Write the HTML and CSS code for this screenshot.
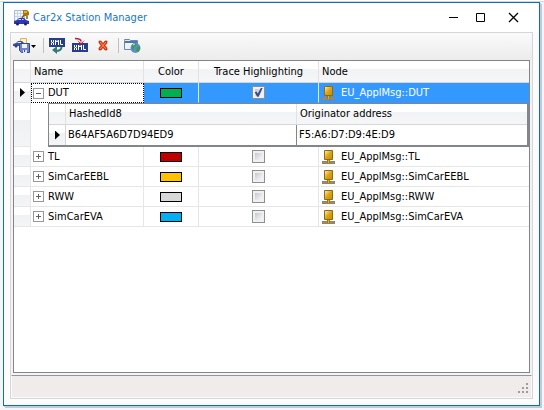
FILE: index.html
```html
<!DOCTYPE html>
<html lang="en">
<head>
<meta charset="utf-8">
<title>Car2x Station Manager</title>
<link rel="stylesheet" href="styles.css">
</head>
<body>
<svg class="defs" aria-hidden="true">
  <defs>
    <linearGradient id="gold" x1="0" y1="0" x2="1" y2="1">
      <stop offset="0" stop-color="#fbf3cc"/><stop offset=".5" stop-color="#d9a515"/><stop offset="1" stop-color="#c88a00"/>
    </linearGradient>
    <symbol id="node" viewBox="0 0 13 14">
      <path d="M0 11h13v3H0z" fill="#858585"/><path d="M1 12h11v1H1z" fill="#c08a20"/>
      <path d="M5 9h3v4H5z" fill="#a8780c"/><path d="M6 9h1v4H6z" fill="#e0b020"/>
      <path d="M2.500.5h8v9h-8z" fill="url(#gold)" stroke="#94680c"/>
    </symbol>
    <symbol id="xml" viewBox="0 0 16 9">
      <path d="M0 0h16v9H0z" fill="#253d8c"/>
      <path d="M2.500 2v2l2 1v2M4.500 2v2l-2 1v2M6.500 7V2l1.500 2 1.500-2v5M11.500 2v4.500H14" fill="none" stroke="#fff"/>
    </symbol>
  </defs>
</svg>
<main class="window">
  <header class="titlebar">
    <svg class="app-icon" viewBox="0 0 17 17" aria-hidden="true">
      <path d="M1.500 1.500h10v11h-10z" fill="#f4f8fe" stroke="#a8bcdc"/>
      <path d="M2 4.500h9M2 7.500h9M4.500 2v9M7.500 2v9" stroke="#c4d5ee"/>
      <path d="M10 1h4l2 2v3l-2 1h-3l-1-2z" fill="#a8740c"/><path d="M11 2h3v2h-3z" fill="#e0ae38"/>
      <path d="M11 6l-2 3M14 7v3" stroke="#8a5c10" stroke-width="1.500"/>
      <path d="M1 12l3-1 2-2h5l2 2 3 1v3H1z" fill="#3038b0"/>
      <path d="M6 10h2v1H5zM9 10h1l1 1H9z" fill="#dce4ff"/>
      <circle cx="4.500" cy="15" r="1.500" fill="#18206c"/><circle cx="12.500" cy="15" r="1.500" fill="#18206c"/>
    </svg>
    <h1>Car2x Station Manager</h1>
    <div class="caption-buttons">
      <button type="button" class="minimize" aria-label="Minimize"><svg viewBox="0 0 11 11"><path d="M1 5.500h9"/></svg></button>
      <button type="button" class="maximize" aria-label="Maximize"><svg viewBox="0 0 11 11"><path d="M1.500 1.500h8v8h-8z"/></svg></button>
      <button type="button" aria-label="Close"><svg viewBox="0 0 11 11"><path class="cross" d="M1 1l9 9M10 1l-9 9"/></svg></button>
    </div>
  </header>
  <section class="panel">
    <div class="toolbar" role="toolbar" aria-label="Stations">
      <button type="button" class="save" aria-label="Save station">
        <svg width="24" height="17" viewBox="0 0 24 17">
          <path d="M7.500 1.500h6v6h-6z" fill="#fff2c8" stroke="#e0b450"/>
          <path d="M0 7l3-1 2-2h4l2 2 1 1v2H0z" fill="#4050a8"/><path d="M5 5h3v1H4z" fill="#dce4ff"/>
          <circle cx="3" cy="9" r="1.500" fill="#303c80"/>
          <path d="M6.500 6.500h10v9h-8l-2-2z" fill="#7282cc" stroke="#38468e"/>
          <path d="M9 7h5v4H9z" fill="#eef2ff"/><path d="M10 13h4v3h-4z" fill="#dfe5f8"/><path d="M11 13h1v2h-1z" fill="#38468e"/>
          <path d="M18 8h5l-2.500 3z" fill="#000"/>
        </svg>
      </button>
      <span class="separator"></span>
      <button type="button" class="export" aria-label="Export XML">
        <svg width="16" height="17" viewBox="0 0 16 17">
          <use href="#xml" width="16" height="9" y="1"/>
          <path d="M12.500 10c0 3-2 4-6 4" fill="none" stroke="#347a70" stroke-width="2"/><path d="M3 13l5-4v8z" fill="#347a70"/>
        </svg>
      </button>
      <button type="button" class="import" aria-label="Import XML">
        <svg width="16" height="17" viewBox="0 0 16 17">
          <use href="#xml" width="16" height="9" y="6"/>
          <path d="M3 1.500c4 0 6 1 6 3" fill="none" stroke="#c01838" stroke-width="1.500"/><path d="M5 3l4 3 4-3-4 5z" fill="#c01838"/>
        </svg>
      </button>
      <button type="button" class="delete" aria-label="Delete">
        <svg width="10" height="17" viewBox="0 0 10 17">
          <path d="M1 4h2l2 2.500L7 4h2v2L7 8.500 9 11v2H7l-2-2.500L3 13H1v-2l2-2.500L1 6z" fill="#e03c10" stroke="#b82808" stroke-width=".7"/>
          <path d="M2 5l6 7M8 5l-6 7" stroke="#ff8a58"/>
        </svg>
      </button>
      <span class="separator"></span>
      <button type="button" aria-label="Open web folder">
        <svg width="17" height="17" viewBox="0 0 17 17">
          <path d="M.5 3.500V2.500h5l1 1h7v9H.5z" fill="#fbe7a8" stroke="#6888bc"/>
          <path d="M1 6h12v6H1z" fill="#eef3fc"/><path d="M1 4h12v2H1z" fill="#4878b8"/><path d="M1 3h4v1H1z" fill="#fbe7a8"/>
          <circle cx="11.500" cy="11" r="5" fill="#5b90cc"/>
          <path d="M8 8l3-2 2 1-1 2-2 1v3l-2-1zM13 10l3-1v3l-2 3-2-1z" fill="#3f9a50"/><path d="M9 8l2-1" stroke="#c8e8d0"/>
        </svg>
      </button>
    </div>
    <div class="grid">
      <table class="stations">
        <colgroup><col class="c-marker"><col class="c-name"><col class="c-color"><col class="c-trace"><col></colgroup>
        <thead>
          <tr><th></th><th scope="col">Name</th><th scope="col" class="center">Color</th><th scope="col" class="center">Trace Highlighting</th><th scope="col">Node</th></tr>
        </thead>
        <tbody>
          <tr class="selected">
            <td class="marker"><span class="arrow"></span></td>
            <td class="focused"><div class="name"><button type="button" class="expander open" aria-label="Collapse DUT"></button>DUT</div></td>
            <td><span class="swatch green"></span></td>
            <td><input type="checkbox" aria-label="Trace highlighting DUT" checked></td>
            <td><div class="node"><svg><use href="#node"/></svg>EU_ApplMsg::DUT</div></td>
          </tr>
          <tr class="detail-row">
            <td class="marker"></td>
            <td colspan="4" class="detail-cell">
              <table class="detail">
                <colgroup><col class="c-marker"><col class="c-hash"><col></colgroup>
                <thead><tr><th></th><th scope="col">HashedId8</th><th scope="col">Originator address</th></tr></thead>
                <tbody><tr><td class="marker"><span class="arrow"></span></td><td>B64AF5A6D7D94ED9</td><td>F5:A6:D7:D9:4E:D9</td></tr></tbody>
              </table>
            </td>
          </tr>
          <tr>
            <td class="marker"></td>
            <td><div class="name"><button type="button" class="expander" aria-label="Expand TL"></button>TL</div></td>
            <td><span class="swatch red"></span></td>
            <td><input type="checkbox" aria-label="Trace highlighting TL"></td>
            <td><div class="node"><svg><use href="#node"/></svg>EU_ApplMsg::TL</div></td>
          </tr>
          <tr>
            <td class="marker"></td>
            <td><div class="name"><button type="button" class="expander" aria-label="Expand SimCarEEBL"></button>SimCarEEBL</div></td>
            <td><span class="swatch yellow"></span></td>
            <td><input type="checkbox" aria-label="Trace highlighting SimCarEEBL"></td>
            <td><div class="node"><svg><use href="#node"/></svg>EU_ApplMsg::SimCarEEBL</div></td>
          </tr>
          <tr>
            <td class="marker"></td>
            <td><div class="name"><button type="button" class="expander" aria-label="Expand RWW"></button>RWW</div></td>
            <td><span class="swatch gray"></span></td>
            <td><input type="checkbox" aria-label="Trace highlighting RWW"></td>
            <td><div class="node"><svg><use href="#node"/></svg>EU_ApplMsg::RWW</div></td>
          </tr>
          <tr>
            <td class="marker"></td>
            <td><div class="name"><button type="button" class="expander" aria-label="Expand SimCarEVA"></button>SimCarEVA</div></td>
            <td><span class="swatch blue"></span></td>
            <td><input type="checkbox" aria-label="Trace highlighting SimCarEVA"></td>
            <td><div class="node"><svg><use href="#node"/></svg>EU_ApplMsg::SimCarEVA</div></td>
          </tr>
        </tbody>
      </table>
    </div>
    <footer class="statusbar">
      <svg width="11" height="11" viewBox="0 0 11 11" aria-hidden="true"><path d="M8 0h2v2H8zM4 4h2v2H4zM8 4h2v2H8zM0 8h2v2H0zM4 8h2v2H4zM8 8h2v2H8z" fill="#a09c9c"/></svg>
    </footer>
  </section>
</main>
</body>
</html>
```
FILE: styles.css
```css
* { box-sizing: border-box; }

body {
  margin: 0;
  height: 100vh;
  display: flex;
  padding: 2px 4px 4px 3px;
  background: linear-gradient(#fff 1px, #d8d8dc 1px, #d8d8dc 2px, #f4f5f8 2px);
  font: 11px/14px Tahoma, "DejaVu Sans Condensed", sans-serif;
  color: #000;
}

button { border: 0; padding: 0; background: none; font: inherit; }
.defs { position: absolute; width: 0; height: 0; }

.window {
  flex: 1;
  display: flex;
  flex-direction: column;
  border: 1px solid #0a6fbe;
  background: #fcfcfc;
  box-shadow: 1px 1px #c6c8d8, 2px 2px #c6cad0;
}

.titlebar { display: flex; align-items: center; height: 29px; padding: 0 20px 0 9px; background: #fff; }
.app-icon { width: 17px; height: 17px; }
.titlebar h1 { margin: 0 auto 0 3px; font-size: 11px; line-height: 16px; font-weight: normal; color: #1478c8; }
.caption-buttons { display: flex; }
.caption-buttons button { display: flex; }
.caption-buttons svg { width: 11px; height: 11px; fill: none; stroke: #000; }
.minimize { margin-right: 16px; }
.maximize { margin-right: 22px; }
.caption-buttons .cross { stroke-width: 1.3; }

.panel {
  flex: 1;
  display: flex;
  flex-direction: column;
  margin: 0 6px 6px;
  border: 1px solid #d6d6d6;
  background: #f3f3f3;
}

.toolbar {
  display: flex;
  align-items: center;
  height: 27px;
  padding: 0 2px 3px;
  background: linear-gradient(#fafafa, #ececec);
}
.toolbar button, .toolbar svg { display: block; }
.separator { width: 1px; height: 15px; margin: 0 5px 0 6px; background: #c0c0c0; }
.import { margin-left: 7px; }
.delete { margin: 0 4px 0 10px; }

.grid { flex: 1; margin: 0 2px; border: 1px solid #84848c; background: #fff; }

table { width: 100%; table-layout: fixed; border-collapse: separate; border-spacing: 0; }
.c-marker { width: 17px; }
.c-name { width: 113px; }
.c-color { width: 55px; }
.c-trace { width: 120px; }
.c-hash { width: 231px; }

th {
  height: 22px;
  padding: 0 3px;
  border-right: 1px solid #e2e2e4;
  border-bottom: 1px solid #d6d6d8;
  background: linear-gradient(#fff 40%, #f1f3f5 40%, #f5f6f8);
  font-weight: normal;
  text-align: left;
}
th.center { text-align: center; }
td {
  height: 20px;
  padding: 0;
  border-right: 1px solid #e6e6e6;
  border-bottom: 1px solid #e6e6e6;
  text-align: center;
  white-space: nowrap;
}
th:last-child, td:last-child { border-right: 0; }
.marker, .selected .marker { background: linear-gradient(#fff 40%, #f0f1f3 40%, #f4f5f6); }
.arrow {
  display: block;
  width: 5px;
  height: 9px;
  margin-left: 6px;
  background: #000;
  clip-path: polygon(0 0, 100% 50%, 0 100%);
}

.name, .node { display: flex; align-items: center; }
.name { gap: 4px; padding-left: 2px; }
.node { gap: 6px; padding-left: 3px; }
.node svg { width: 13px; height: 14px; }

.selected td { background-color: #3399ff; border-bottom-color: #3399ff; color: #fff; }
.selected .marker { border-bottom-color: #e6e6e6; }
.selected .focused { background: #fff; border: 1px dotted #000; color: #000; }
.focused .name { padding-left: 1px; }

.expander {
  width: 11px;
  height: 11px;
  border: 1px solid #989898;
  background:
    linear-gradient(#606060, #606060) center / 5px 1px no-repeat,
    linear-gradient(#606060, #606060) center / 1px 5px no-repeat,
    #fff;
}
.expander.open { background: linear-gradient(#606060, #606060) center / 5px 1px no-repeat, #fff; }

.swatch { display: block; width: 22px; height: 10px; margin: 0 auto; border: 1px solid #000; }
.green { background: #00b050; }
.red { background: #c00000; }
.yellow { background: #ffc000; }
.gray { background: #d8d8d8; }
.blue { background: #00b0f0; }

input[type="checkbox"] {
  appearance: none;
  display: block;
  width: 13px;
  height: 13px;
  margin: 0 auto;
  border: 1px solid #8e8f8f;
  background: linear-gradient(135deg, #c4c9d0, #f8f8f8) center / 7px 7px no-repeat, #f0f0f0;
}
input[type="checkbox"]:checked::after {
  content: "";
  display: block;
  width: 9px;
  height: 9px;
  margin: 1px;
  background: #384c90;
  clip-path: polygon(8% 48%, 28% 40%, 42% 62%, 76% 0, 96% 0, 52% 96%, 34% 96%);
}

.detail-cell { padding-left: 17px; border: 0; }
.detail { border: 1px solid #84848c; border-bottom-width: 2px; border-right-width: 2px; }
.detail th { height: 21px; }
.detail td { padding: 0 2px; border-right-color: #84848c; border-bottom: 0; text-align: left; }
.detail .marker { padding: 0; border-right-color: #d6d6d8; }

.statusbar {
  display: flex;
  justify-content: flex-end;
  align-items: flex-end;
  height: 23px;
  margin: 2px 0 0;
  padding: 0 2px 3px;
  border: 1px solid #fafafa;
  border-top: 1px solid #94949a;
  background: #f0eceb;
}
.statusbar svg { display: block; }
```
